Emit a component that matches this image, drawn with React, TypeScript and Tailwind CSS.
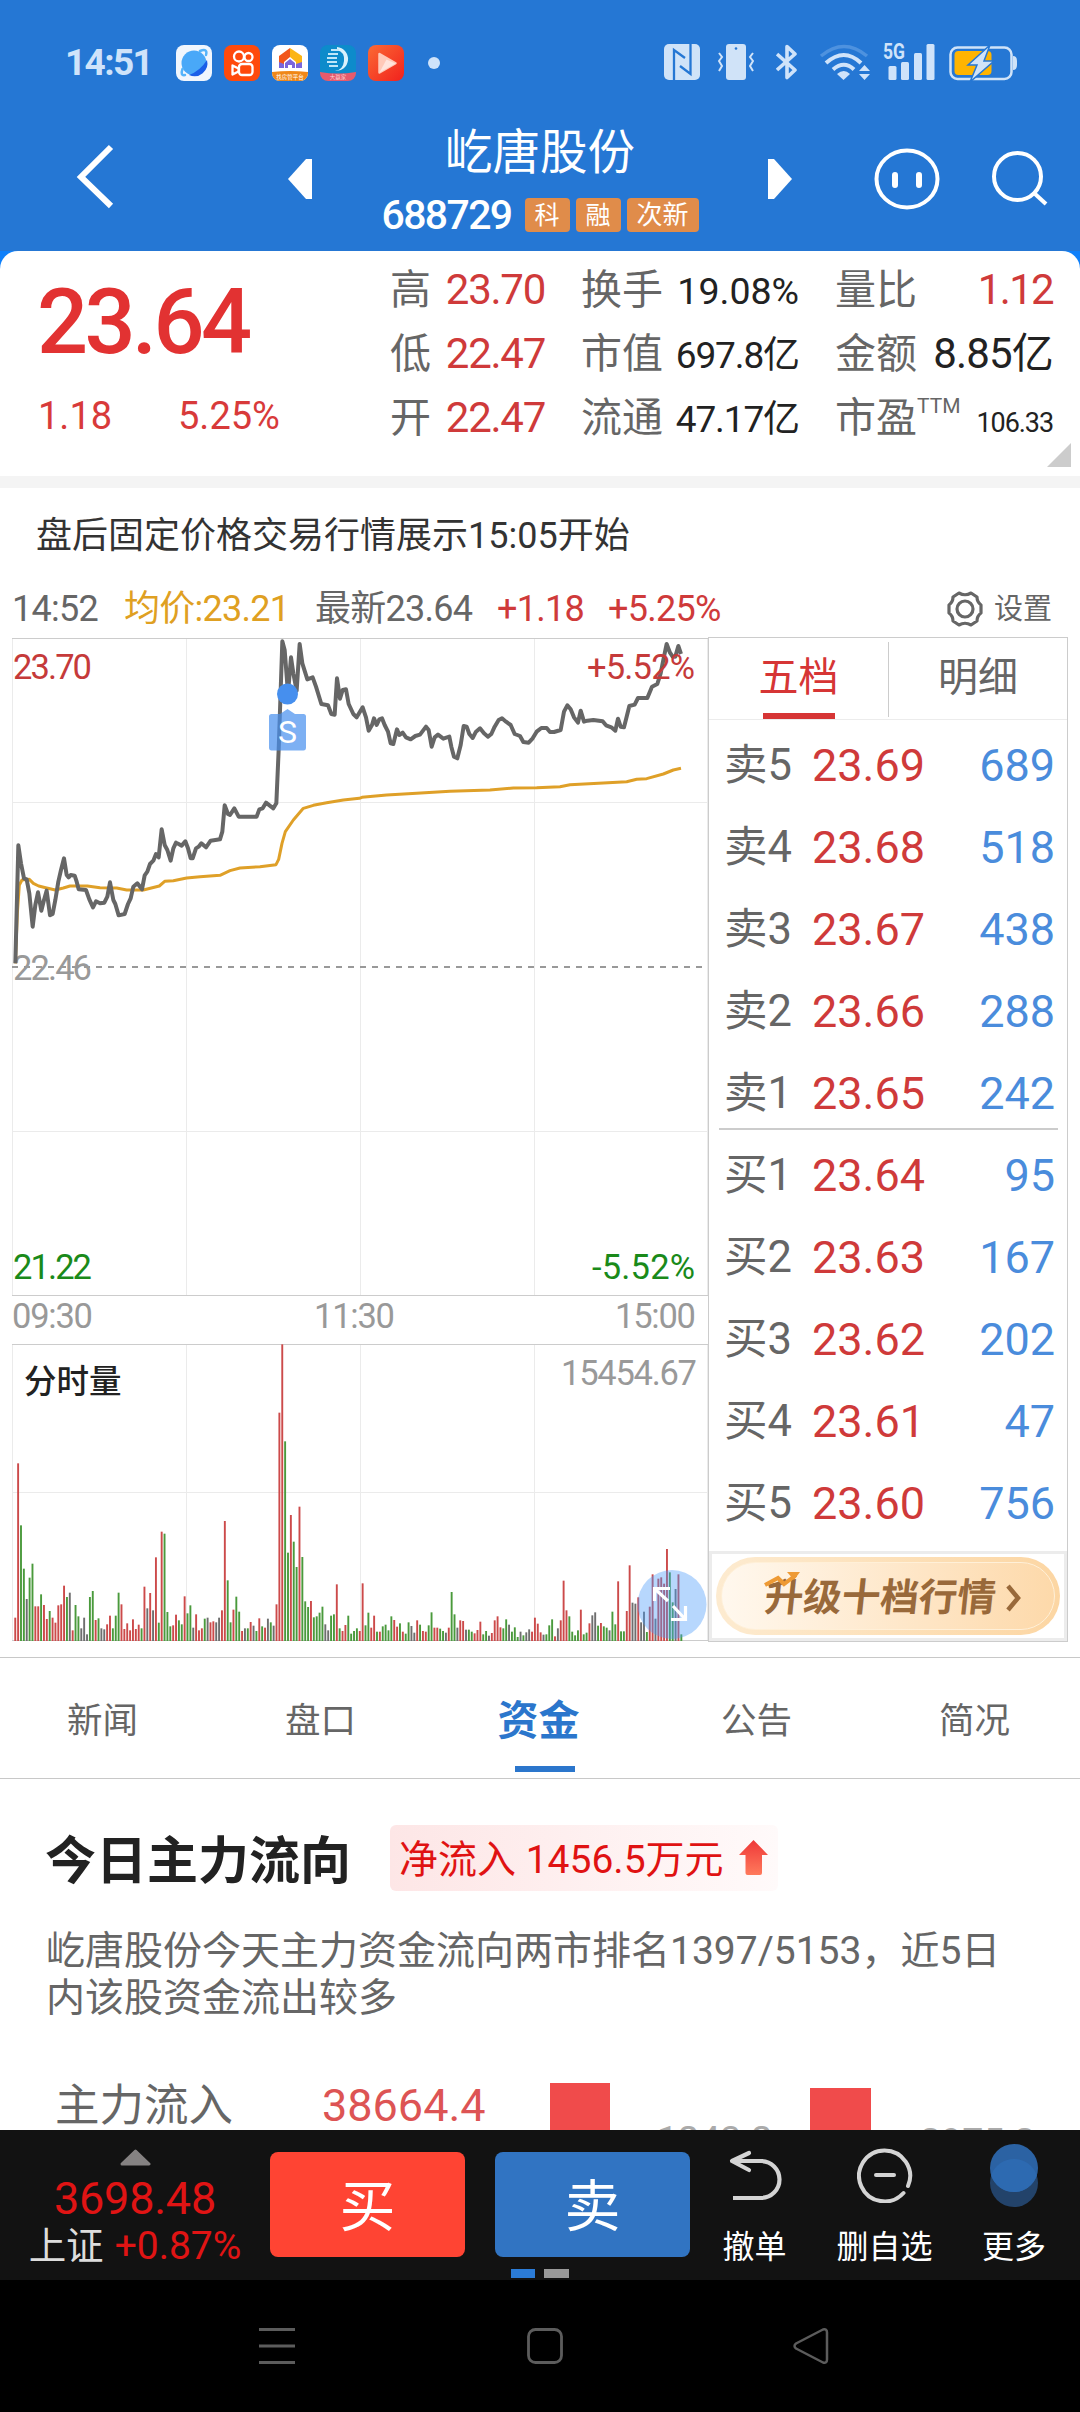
import React from 'react';

interface BookRow {
  label: string;
  price: string;
  amount: string;
}

const SELLS: BookRow[] = [
  { label: '卖5', price: '23.69', amount: '689' },
  { label: '卖4', price: '23.68', amount: '518' },
  { label: '卖3', price: '23.67', amount: '438' },
  { label: '卖2', price: '23.66', amount: '288' },
  { label: '卖1', price: '23.65', amount: '242' },
];

const BUYS: BookRow[] = [
  { label: '买1', price: '23.64', amount: '95' },
  { label: '买2', price: '23.63', amount: '167' },
  { label: '买3', price: '23.62', amount: '202' },
  { label: '买4', price: '23.61', amount: '47' },
  { label: '买5', price: '23.60', amount: '756' },
];

const TABS = ['新闻', '盘口', '资金', '公告', '简况'];

// Both lines use a 3x coordinate space
const PRICE_LINE =
  '46,1000 55,646 63,700 72,745 80,748 88,790 98,890 106,825 114,787 124,842 132,810 140,782 150,856 158,852 166,810 175,755 183,720 192,685 200,735 206,742 212,735 224,737 230,755 236,778 258,780 268,808 279,832 288,814 300,820 313,818 322,800 330,757 340,810 346,822 356,856 374,852 384,822 392,805 400,770 412,760 426,778 434,736 442,725 450,702 460,692 468,672 476,682 485,598 494,645 502,660 512,692 520,655 528,638 536,642 545,647 556,634 564,655 572,685 578,685 588,655 596,650 604,640 618,652 632,632 660,628 667,605 674,526 684,552 690,555 703,535 716,560 770,560 778,538 788,535 798,518 820,535 829,520 836,360 847,34 854,60 864,190 873,82 880,130 890,182 899,42 907,100 922,148 938,142 948,170 964,222 984,226 994,252 1004,254 1011,145 1020,206 1028,180 1038,178 1046,222 1060,252 1070,262 1088,232 1098,262 1106,302 1116,285 1122,265 1130,285 1138,268 1146,265 1154,285 1164,305 1172,340 1180,342 1191,298 1198,315 1208,308 1218,322 1232,328 1246,318 1260,314 1278,290 1286,300 1295,350 1304,322 1314,314 1330,326 1348,320 1354,350 1362,380 1372,385 1382,345 1391,288 1400,290 1408,312 1418,324 1428,305 1440,295 1452,310 1464,320 1474,312 1484,290 1496,270 1506,265 1518,275 1532,285 1544,312 1560,318 1570,336 1586,338 1598,325 1610,305 1624,294 1640,294 1650,306 1662,306 1682,300 1692,245 1702,226 1712,238 1722,262 1734,278 1742,242 1752,275 1762,272 1780,270 1808,274 1818,286 1834,292 1846,302 1854,266 1862,290 1872,292 1880,260 1888,228 1904,224 1914,204 1942,204 1956,170 1972,162 1982,130 1992,80 2000,42 2010,68 2018,80 2026,80 2035,48 2043,72';

const AVG_LINE =
  '46,1000 52,850 58,765 66,750 88,748 100,760 116,768 140,774 166,780 190,774 210,768 262,768 300,773 350,774 380,780 430,780 478,768 494,754 520,752 560,744 600,740 660,736 690,722 720,714 780,710 828,704 836,688 846,640 856,605 880,570 910,535 940,526 980,518 1030,510 1078,505 1086,502 1160,495 1250,490 1350,484 1470,480 1540,474 1610,473 1680,470 1710,464 1810,459 1880,455 1910,448 1940,446 1990,432 2020,420 2043,415';

// r = up, g = down, k = flat
const VOLUME =
  'r70 r533 g347 g217 k126 g190 g232 r104 r104 g140 r108 r66 g90 r70 r55 r107 r110 r166 g132 k145 r32 g108 g74 k38 k70 k20 g132 g150 r63 g68 k38 k35 r50 r76 g38 g76 g145 r110 r36 r53 r32 r65 r36 r49 g38 r163 k98 r144 k92 r251 g55 r328 g322 g87 g44 r47 r79 g62 g50 r134 g83 g107 k40 r80 r32 r38 g67 k70 r56 r59 k56 k70 r92 r360 g182 g56 r94 g133 g88 r30 k38 g38 r57 k46 g30 r68 g44 r40 k67 g56 k46 r110 r685 r890 g599 g265 r378 g298 g222 r403 g252 g119 g102 r120 g71 g74 g85 g103 k50 k32 g76 g80 r170 g38 r30 r48 g76 g22 g30 g38 r30 r173 g47 g85 r40 r76 g28 r28 g44 g49 g32 g74 r63 r43 g53 r28 g22 g56 k45 k25 r62 g49 r30 r28 g47 g86 r40 r40 g37 g30 k25 r40 g147 g80 k40 r62 r60 k34 g34 g28 r23 r33 r58 g20 g30 k16 r24 r62 r74 r41 g38 g65 k49 g28 g41 g12 k28 g17 k26 k35 r28 r70 r52 r26 k19 g20 g47 g65 r14 k38 r62 r181 r92 g74 g28 g17 g32 r94 g20 g25 r53 k77 k86 g46 r54 g44 g40 k32 g88 g50 r179 g29 g29 r90 r227 k115 k112 r131 k56 k88 g27 r103 r200 k67 r187 r191 r172 r276 g206 g116 k156 r200 g20'.split(' ');

const BAR_COLORS: Record<string, string> = { r: '#cc4a4a', g: '#4a9a3c', k: '#6e6e6e' };

function StatusBar() {
  return (
    <div className="flex h-[105px] shrink-0 items-start pt-[44px] pl-[65px] text-[#cfe3fa]">
      <span className="w-[111px] text-[37px] leading-[38px] font-bold tracking-[-0.045em]">14:51</span>
      <div className="flex gap-3">
        <svg className="mt-px h-9 w-9" viewBox="0 0 36 36">
          <rect width="36" height="36" rx="8" fill="#f1f6fd" />
          <circle cx="18" cy="18" r="12.500" fill="#49a8f8" />
          <path d="M31 15a13 13 0 0 1-18 15Q24 26 31 15z" fill="#1b5fe8" />
          <path d="M6.500 24Q4 31 9 30M24 6Q32 3 30 10" fill="none" stroke="#55b4fb" strokeWidth="2.500" strokeLinecap="round" />
        </svg>
        <svg className="mt-px h-9 w-9" viewBox="0 0 36 36" fill="none" stroke="#fff" strokeWidth="2.300">
          <rect width="36" height="36" rx="8" fill="#ff4a0c" stroke="none" />
          <circle cx="15" cy="11.500" r="5" />
          <circle cx="24.500" cy="12" r="4" />
          <rect x="15" y="19" width="13.500" height="11" rx="3" />
          <path d="M8.500 20.500l6 3v3l-6 3z" strokeLinejoin="round" />
        </svg>
        <svg className="mt-px h-9 w-9 overflow-visible" viewBox="0 0 36 36">
          <defs>
            <clipPath id="house-clip"><rect width="36" height="36" rx="8" /></clipPath>
          </defs>
          <g clipPath="url(#house-clip)">
            <rect width="36" height="36" fill="#fff" />
            <path d="M18 3L7 11v12h5v-6l6-5z" fill="#f2571b" />
            <path d="M18 3l12 8v12h-6v-6l-6-5z" fill="#fcb514" />
            <path d="M7 17l5 2v4H7zM24 19l6-2v6h-6z" fill="#7a66dc" />
            <path d="M13 23v-5l5-4 5 4v5h-3v-3h-4v3z" fill="#7a66dc" />
            <path d="M0 27q18-2 36 0v9H0z" fill="#ef8718" />
          </g>
          <text x="18" y="33.500" fontSize="5.500" fill="#fff" textAnchor="middle">找房管平台</text>
        </svg>
        <svg className="mt-px h-9 w-9 overflow-visible" viewBox="0 0 36 36">
          <defs>
            <clipPath id="bank-clip"><rect width="36" height="36" rx="8" /></clipPath>
          </defs>
          <g clipPath="url(#bank-clip)">
            <rect width="36" height="36" fill="#0d8bcb" />
            <path d="M17 2a12 12 0 1 1-2 24q8-1 9-10t-7-11z" fill="#d9f1fc" />
            <path d="M11 5h8M8 9h10M7 13h10M7 17h10M9 21h9" stroke="#bfe6f8" strokeWidth="2" />
            <path d="M0 27q18 3 36 0v9H0z" fill="#e75a6c" />
          </g>
          <text x="18" y="34" fontSize="5.500" fill="#fcd3d3" textAnchor="middle">大赢家</text>
        </svg>
        <svg className="mt-px h-9 w-9" viewBox="0 0 36 36">
          <defs>
            <linearGradient id="play-bg" x1="0" y1="0" x2="1" y2="1">
              <stop offset="0" stopColor="#fb6a34" />
              <stop offset="1" stopColor="#f1211d" />
            </linearGradient>
          </defs>
          <rect width="36" height="36" rx="8" fill="url(#play-bg)" />
          <path d="M11.500 9v18.500l16-9.250z" fill="#ffc9b8" stroke="#ffc9b8" strokeWidth="2.500" strokeLinejoin="round" />
          <path d="M11.500 27.500l7-13 9 4z" fill="#ffe4dc" />
        </svg>
      </div>
      <span className="mt-[13px] ml-[24px] h-3 w-3 rounded-full bg-[#cfe3fa]" />

      <svg className="ml-[224px] h-9 w-9" viewBox="0 0 36 36">
        <rect width="36" height="36" rx="5" fill="#d0e3f8" />
        <path d="M10 36V6l11 8M26.500 0v30L16 22" fill="none" stroke="#2577d4" strokeWidth="2.300" />
      </svg>
      <svg className="ml-[18px] h-9 w-9" viewBox="0 0 36 36">
        <rect x="8" width="20" height="36" rx="3" fill="#d0e3f8" />
        <circle cx="18" cy="4.500" r="1.300" fill="#2577d4" />
        <path d="M1 9l3 4-3 4 3 5-3 5M35 9l-3 4 3 4-3 5 3 5" fill="none" stroke="#d0e3f8" strokeWidth="2" />
      </svg>
      <svg className="ml-[22px] h-9 w-[22px]" viewBox="0 0 22 36" fill="none" stroke="currentColor" strokeWidth="3.600">
        <path d="M1 10l18 16-8 7.500v-31l8 7.500L1 26" strokeLinejoin="round" />
      </svg>
      <svg className="ml-[21px] h-[37px] w-[52px]" viewBox="0 0 52 37" fill="none" stroke="currentColor" strokeWidth="4">
        <path d="M2 12Q25-7 48 12" stroke="#4e92df" strokeWidth="3.500" />
        <path d="M7 19Q25 3 42 19M14 25.500Q25 16 35 25.500" />
        <path d="M18 30q7-6 13 0l-6.500 6z" fill="currentColor" stroke="none" />
        <path d="M40 27l5.500-6 5.500 6zM40 30l5.500 6 5.500-6z" fill="currentColor" stroke="none" />
      </svg>
      <svg className="ml-[12px] h-9 w-[54px] overflow-visible" viewBox="0 0 54 36" fill="currentColor">
        <text x="0" y="15" fontSize="22" fontWeight="700" textLength="22" lengthAdjust="spacingAndGlyphs">5G</text>
        <rect x="5.500" y="22" width="8" height="14" rx="1.500" />
        <rect x="18" y="18" width="8" height="18" rx="1.500" />
        <rect x="31" y="9" width="8" height="27" rx="1.500" />
        <rect x="43.500" y="0" width="8" height="36" rx="1.500" />
      </svg>
      <svg className="ml-[12px] h-[38px] w-[68px]" viewBox="0 0 68 38">
        <rect x="1.500" y="3.500" width="61" height="31.500" rx="7" fill="none" stroke="#d0e3f8" strokeWidth="2.500" />
        <path d="M64 12q4 0 4 5v4q0 5-4 5z" fill="#d0e3f8" />
        <rect x="5.500" y="7" width="37" height="24" rx="4" fill="#ffb400" />
        <path d="M41 1L19 21h9l-7 17 24-21H35z" fill="#d0e3f8" stroke="#2577d4" strokeWidth="1.500" />
      </svg>
    </div>
  );
}

function Header() {
  return (
    <div className="flex h-[146px] shrink-0 items-start text-white">
      <svg className="mt-[38px] ml-[74px] h-[66px] w-[40px]" viewBox="0 0 40 66" fill="none" stroke="currentColor" strokeWidth="6">
        <path d="M37 4L7 34l30 29" />
      </svg>
      <svg className="mt-[54px] ml-[174px] h-10 w-6" viewBox="0 0 24 40" fill="currentColor">
        <path d="M0 20L18 0h6v40h-6z" />
      </svg>
      <div className="ml-[28px] flex w-[400px] flex-col items-center pt-[22px]">
        <h1 className="text-[47.5px] leading-[52px]">屹唐股份</h1>
        <div className="mt-[17px] flex items-center gap-[6px]">
          <span className="w-[135px] text-[41px] leading-[38px] font-medium tracking-[-0.04em]">688729</span>
          <span className="ml-[2px] flex h-[34px] w-[45px] items-center justify-center rounded-sm bg-[#e08c4a] text-[25px] leading-none">科</span>
          <span className="flex h-[34px] w-[45px] items-center justify-center rounded-sm bg-[#e08c4a] text-[25px] leading-none">融</span>
          <span className="flex h-[34px] w-[72px] items-center justify-center rounded-sm bg-[#e08c4a] text-[26px] leading-none">次新</span>
        </div>
      </div>
      <svg className="mt-[54px] ml-[28px] h-10 w-6" viewBox="0 0 24 40" fill="currentColor">
        <path d="M24 20L6 0H0v40h6z" />
      </svg>
      <svg className="mt-[42px] ml-[82px] h-16 w-[66px]" viewBox="0 0 66 64" fill="none" stroke="currentColor" strokeWidth="4">
        <ellipse cx="33" cy="32" rx="30.500" ry="28.500" />
        <path d="M21 28v10M45 28v10" strokeWidth="6" strokeLinecap="round" />
      </svg>
      <svg className="mt-[44px] ml-[50px] h-16 w-[60px]" viewBox="0 0 60 64" fill="none" stroke="currentColor" strokeWidth="4">
        <circle cx="27.500" cy="27.500" r="23.500" />
        <path d="M44 44l12 11" />
      </svg>
    </div>
  );
}

function Stat({ label, value, className }: { label: React.ReactNode; value: string; className: string }) {
  return (
    <div className="flex h-16 items-baseline justify-between">
      <span className="text-[41px] leading-[64px] text-[#666]">{label}</span>
      <span className={className}>{value}</span>
    </div>
  );
}

function Summary() {
  return (
    <div className="relative flex h-[225px] shrink-0 rounded-t-[18px] bg-white">
      <div className="w-[390px] pl-[37px] text-[#d83a3a]">
        <div className="pt-[27px] text-[90px] leading-[90px] font-medium tracking-[-0.04em] text-[#e23232]">23.64</div>
        <div className="mt-[25px] flex text-[38px] leading-[46px]">
          <span className="w-[141px] pl-px">1.18</span>
          <span>5.25%</span>
        </div>
      </div>
      <div className="w-[155px] pt-[7px]">
        <Stat label="高" value="23.70" className="text-[42px] tracking-[-0.03em] text-[#cf3a3a]" />
        <Stat label="低" value="22.47" className="text-[42px] tracking-[-0.03em] text-[#cf3a3a]" />
        <Stat label="开" value="22.47" className="text-[42px] tracking-[-0.03em] text-[#cf3a3a]" />
      </div>
      <div className="ml-[36px] w-[218px] pt-[7px]">
        <Stat label="换手" value="19.08%" className="text-[37.5px] text-[#222]" />
        <Stat label="市值" value="697.8亿" className="text-[37px] tracking-[-0.03em] text-[#222]" />
        <Stat label="流通" value="47.17亿" className="text-[37px] tracking-[-0.03em] text-[#222]" />
      </div>
      <div className="ml-[36px] w-[218px] pt-[7px]">
        <Stat label="量比" value="1.12" className="text-[42px] tracking-[-0.04em] text-[#cf3a3a]" />
        <Stat label="金额" value="8.85亿" className="text-[42px] tracking-[-0.02em] text-[#222]" />
        <Stat
          label={<>市盈<span className="relative -top-[19px] text-[21px] leading-none">TTM</span></>}
          value="106.33"
          className="text-[27px] tracking-[-0.04em] text-[#222]"
        />
      </div>
      <svg className="absolute right-[9px] bottom-[9px] h-6 w-6" viewBox="0 0 24 24">
        <path d="M24 0v24H0z" fill="#ccc" />
      </svg>
    </div>
  );
}

function QuoteLine() {
  return (
    <div className="flex h-[58px] items-center text-[36px] leading-[44px] tracking-[-0.02em] whitespace-nowrap">
      <span className="w-[111px] pl-[12px] text-[#666]">14:52</span>
      <span className="w-[192px] pl-[13px] text-[#dfa022]">均价:23.21</span>
      <span className="w-[182px] pl-[12px] text-[#666]">最新23.64</span>
      <span className="w-[111px] pl-[12px] text-[#cf3a3a]">+1.18</span>
      <span className="w-[350px] pl-[12px] text-[#cf3a3a]">+5.25%</span>
      <svg className="h-[38px] w-[38px]" viewBox="0 0 38 38" fill="none" stroke="#666" strokeWidth="3.200" strokeLinejoin="round">
        <path d="M13 3q6 3.500 12 0l6 4q0 5 4 8v8q-4 3-4 8l-6 4q-6-3.500-12 0l-6-4q0-5-4-8v-8q4-3 4-8z" />
        <circle cx="19" cy="19" r="8" />
      </svg>
      <span className="ml-[10px] text-[29px] tracking-normal text-[#666]">设置</span>
    </div>
  );
}

function PriceChart() {
  return (
    <svg className="block h-[706px] w-[708px]" viewBox="0 0 708 706">
      <path d="M12.500 0V657M186.500 0V657M360.500 0V657M534.500 0V657M707.500 0V657M12 164.500H708M12 493.500H708" stroke="#ebebeb" strokeWidth="1" />
      <path d="M12 .5H708M12 657.500H708" stroke="#ccc" strokeWidth="1.200" />
      <path d="M12 329H706" stroke="#999" strokeWidth="2" strokeDasharray="6 6" />
      <text x="13" y="342" fontSize="34.500" fill="#999" textLength="79">22.46</text>
      <g transform="translate(0 -8) scale(.33333)" fill="none" strokeLinejoin="round">
        <polyline points={AVG_LINE} stroke="#dfa028" strokeWidth="9" />
        <polyline points={PRICE_LINE} stroke="#666" strokeWidth="12" />
      </g>
      <circle cx="287.500" cy="56" r="10.500" fill="#468fee" />
      <path d="M280 76l7.500-5 7.500 5h8.500q2.500 0 2.500 2.500v31q0 3-2.500 3h-32q-2.500 0-2.500-3v-31q0-2.500 2.500-2.500z" fill="#468fee" opacity=".7" />
      <text x="287.500" y="105" fontSize="32" fill="#fff" textAnchor="middle">S</text>
      <g fontSize="34.500" fill="#999">
        <text x="13" y="41" fill="#c53a3a" textLength="79">23.70</text>
        <text x="587" y="41" fill="#c53a3a" textLength="108">+5.52%</text>
        <text x="13" y="641" fill="#1a8a1a" textLength="79">21.22</text>
        <text x="592" y="641" fill="#1a8a1a" textLength="103">-5.52%</text>
        <text x="12" y="690" textLength="81">09:30</text>
        <text x="314" y="690" textLength="81">11:30</text>
        <text x="615" y="690" textLength="81">15:00</text>
      </g>
    </svg>
  );
}

function VolumeChart() {
  return (
    <svg className="block h-[298px] w-[708px]" viewBox="0 0 708 298">
      <path d="M12.500 0V297M186.500 0V297M360.500 0V297M534.500 0V297M707.500 0V297M12 148.500H708" stroke="#ebebeb" strokeWidth="1" />
      <path d="M12 .5H708M12 296.500H708" stroke="#ccc" strokeWidth="1.200" />
      {VOLUME.map((bar, i) => {
        const h = Number(bar.slice(1)) / 3;
        return <rect key={i} x={14.3 + i * 2.871} y={297 - h} width="1.900" height={h} fill={BAR_COLORS[bar[0]]} />;
      })}
      <text x="24" y="49" fontSize="32.500" fontWeight="500" fill="#222">分时量</text>
      <text x="561" y="41" fontSize="34.500" fill="#999" textLength="136">15454.67</text>
      <circle cx="672" cy="260.500" r="34.500" fill="#4a9cfb" opacity=".4" />
      <path d="M668 257l-13-12M670 244.500h-15.500V257M673 262l12 13M685.500 262v13.500H671" fill="none" stroke="#fff" strokeWidth="3.200" />
    </svg>
  );
}

function BookLine({ row }: { row: BookRow }) {
  return (
    <div className="flex h-[82px] items-center text-[45px] leading-[54px]">
      <span className="w-[88px] text-[43.5px] text-[#666]">{row.label}</span>
      <span className="text-[#cf3a3a]">{row.price}</span>
      <span className="ml-auto text-[#4a8cdc]">{row.amount}</span>
    </div>
  );
}

function OrderBook() {
  return (
    <div className="-mt-px flex h-[1005px] w-[360px] flex-col border border-[#ccc]">
      <div className="flex h-[82px] shrink-0 border-b border-[#ececec] pt-[4px] text-[40px] leading-[72px]">
        <div className="flex h-[75px] w-[180px] flex-col items-center border-r border-[#ccc] text-[#d63535]">
          <span className="h-[71px] shrink-0">五档</span>
          <span className="h-[6px] w-[72px] shrink-0 bg-[#d63535]" />
        </div>
        <div className="flex-1 text-center text-[#666]">明细</div>
      </div>
      <div className="pt-[5px] pr-[12px] pl-[15px]">
        {SELLS.map((row) => <BookLine key={row.label} row={row} />)}
      </div>
      <div className="mx-auto -mt-[7px] h-[2px] w-[339px] shrink-0 bg-[#ccc]" />
      <div className="pt-[5px] pr-[12px] pl-[15px]">
        {BUYS.map((row) => <BookLine key={row.label} row={row} />)}
      </div>
      <div className="mt-auto flex h-[90px] shrink-0 items-center border-[3px] border-[#ececec] px-[4px]">
        <div className="h-[78px] w-full rounded-full bg-gradient-to-r from-[#fdebd0] to-[#fcd6a3] p-[5px]">
          <div className="relative flex h-full w-full items-center rounded-full border border-[#fff0d8] bg-gradient-to-r from-[#fff8ee] to-[#fdd9aa] pl-[43px] text-[38.5px] leading-none font-bold text-[#99693a]">
            <span className="-skew-x-6 pt-[5px]">升级十档行情</span>
            <svg className="mt-1 ml-[9px] h-7 w-5" viewBox="0 0 20 28" fill="none" stroke="currentColor" strokeWidth="4.500">
              <path d="M3 2l10 12L3 26" />
            </svg>
            <svg className="absolute top-[7px] left-[41px] h-[18px] w-[38px]" viewBox="0 0 38 18" fill="none" stroke="#ee9a34" strokeWidth="4">
              <path d="M2 15l13-7 6 6L33 5" />
              <path d="M24 2h13l-6 8z" fill="#ee9a34" stroke="none" />
            </svg>
          </div>
        </div>
      </div>
    </div>
  );
}

function DetailTabs() {
  return (
    <div className="mt-[15px] flex h-[122px] shrink-0 justify-center border-y border-[#c8c8c8] pr-[3px]">
      {TABS.map((tab) => (
        <div key={tab} className="flex w-[218px] shrink-0 flex-col items-center">
          {tab === '资金' ? (
            <>
              <span className="h-[108px] text-[41px] leading-[126px] font-bold text-[#2b76cc]">{tab}</span>
              <span className="ml-[12px] h-[6px] w-[60px] bg-[#2b76cc]" />
            </>
          ) : (
            <span className="text-[35.5px] leading-[126px] text-[#666]">{tab}</span>
          )}
        </div>
      ))}
    </div>
  );
}

function MoneyFlow() {
  return (
    <div className="flex min-h-0 flex-1 flex-col overflow-hidden text-[#666]">
      <div className="flex shrink-0 items-center pt-[46px] pl-[45px]">
        <h2 className="w-[345px] pt-[7px] text-[51px] leading-[59px] font-bold text-[#222]">今日主力流向</h2>
        <div className="flex h-[66px] w-[388px] items-center rounded-md bg-gradient-to-r from-[#fde6e6] to-[#fffafa] pl-[9px] text-[39px] leading-none whitespace-nowrap text-[#e01212]">
          <span className="pt-[4px]">净流入 1456.5万元</span>
          <svg className="ml-[15px] h-9 w-[29px]" viewBox="0 0 29 36">
            <defs>
              <linearGradient id="up-arrow" x1="0" y1="0" x2="0" y2="1">
                <stop offset="0" stopColor="#ee3838" />
                <stop offset="1" stopColor="#ff7a5c" />
              </linearGradient>
            </defs>
            <path d="M14.500 0L29 15h-6v18q0 2-2 2H8.500q-2 0-2-2V15H0z" fill="url(#up-arrow)" />
          </svg>
        </div>
      </div>
      <p className="mt-[37px] shrink-0 pl-[46px] text-[39px] leading-[47px] whitespace-nowrap">
        屹唐股份今天主力资金流向两市排名1397/5153，近5日<br />内该股资金流出较多
      </p>
      <div className="mt-[61px] flex shrink-0 items-start">
        <span className="w-[322px] pl-[55px] text-[44.5px] leading-[46px]">主力流入</span>
        <span className="w-[228px] text-[45px] leading-[46px] text-[#dd5454]">38664.4</span>
        <span className="h-[80px] w-[60px] bg-[#f04b4b]" />
        <span className="mt-[32px] w-[200px] pl-[47px] text-[37.5px] leading-[48px] text-[#aaa]">1243.2</span>
        <span className="mt-[5px] h-[80px] w-[61px] bg-[#f04b4b]" />
        <span className="mt-[34px] pl-[49px] text-[37.5px] leading-[48px] text-[#aaa]">2975.2</span>
      </div>
    </div>
  );
}

function BottomBar() {
  return (
    <div className="flex h-[150px] shrink-0 bg-[#121212] text-white">
      <div className="flex w-[270px] flex-col items-center pt-[19px]">
        <svg className="h-[17px] w-[31px]" viewBox="0 0 31 17">
          <path d="M15.500 2L29 15H2z" fill="#858282" stroke="#858282" strokeWidth="3" strokeLinejoin="round" />
        </svg>
        <span className="mt-[6px] text-[45px] leading-[54px] tracking-[-0.005em] text-[#e01414]">3698.48</span>
        <div className="flex gap-[11px] text-[39px] leading-[40px]">
          <span className="text-[37.5px] text-[#ddd]">上证</span>
          <span className="text-[#e01414]">+0.87%</span>
        </div>
      </div>
      <div className="pt-[22px]">
        <div className="flex gap-[30px] text-[56px] leading-[110px]">
          <button className="h-[105px] w-[195px] rounded-lg bg-[#ff4433]">买</button>
          <button className="h-[105px] w-[195px] rounded-lg bg-[#3174c2]">卖</button>
        </div>
        <div className="mt-[12px] flex gap-[9px] pl-[241px]">
          <span className="h-[9px] w-[24px] bg-[#2b7bd6]" />
          <span className="h-[9px] w-[25px] bg-[#999]" />
        </div>
      </div>
      <div className="flex pt-[17px] text-[32px] leading-[40px]">
        <div className="flex w-[129px] flex-col items-center">
          <svg className="h-[56px] w-[56px]" viewBox="0 0 56 56" fill="none" stroke="#d4d4d4" strokeWidth="4.200">
            <path d="M22 6L5 14l17 9" strokeLinecap="round" strokeLinejoin="round" />
            <path d="M5 14h29a18 18 0 0 1 0 37H6" />
          </svg>
          <span className="mt-[24px]">撤单</span>
        </div>
        <div className="flex w-[131px] flex-col items-center">
          <svg className="h-[56px] w-[56px]" viewBox="0 0 56 56" fill="none" stroke="#d4d4d4" strokeWidth="4" strokeLinecap="round">
            <path d="M51 39A25.500 25.500 0 1 0 46.500 46" />
            <path d="M19 28h18" />
          </svg>
          <span className="mt-[24px]">删自选</span>
        </div>
        <div className="flex w-[128px] flex-col items-center">
          <svg className="-mt-[5px] h-[66px] w-[50px]" viewBox="0 0 50 66">
            <circle cx="25" cy="41" r="24" fill="#23436a" />
            <circle cx="25" cy="26" r="24" fill="#2b62a3" />
            <path d="M2.200 33.500a24 24 0 0 1 45.600 0a24 24 0 0 1-45.600 0z" fill="#2d6ab1" />
          </svg>
          <span className="mt-[19px]">更多</span>
        </div>
      </div>
    </div>
  );
}

function SystemNav() {
  return (
    <div className="flex h-[132px] shrink-0 items-start bg-black pt-[46px] pl-[258px]">
      <svg className="h-[40px] w-[38px]" viewBox="0 0 38 40" stroke="#5c5c5c" strokeWidth="3">
        <path d="M1 3.500h36M1 20h36M1 36.500h36" />
      </svg>
      <svg className="ml-[230px] h-[40px] w-[38px]" viewBox="0 0 38 40" fill="none" stroke="#5c5c5c" strokeWidth="2.800">
        <rect x="2.500" y="3.500" width="33" height="33" rx="7" />
      </svg>
      <svg className="ml-[229px] h-[40px] w-[38px]" viewBox="0 0 38 40" fill="none" stroke="#5c5c5c" strokeWidth="2.500" strokeLinejoin="round">
        <path d="M3 17.500L30 3.500q4-1 4 3v27q0 4-4 3L3 22.500q-3-2.500 0-5z" />
      </svg>
    </div>
  );
}

export default function App() {
  return (
    <div className="flex h-[2412px] w-[1080px] flex-col overflow-hidden bg-white font-[Roboto,'Noto_Sans_CJK_SC',sans-serif]">
      <div className="flex shrink-0 flex-col bg-[#2577d4]">
        <StatusBar />
        <Header />
      </div>
      <div className="shrink-0 bg-[#0f80fa]">
        <Summary />
      </div>
      <div className="h-3 shrink-0 bg-[#f4f4f4]" />
      <div className="h-[92px] shrink-0 pl-[36px] text-[36px] leading-[96px] text-[#333]">盘后固定价格交易行情展示15:05开始</div>
      <div className="shrink-0">
        <QuoteLine />
      </div>
      <div className="flex h-[1004px] shrink-0">
        <div className="flex w-[708px] flex-col">
          <PriceChart />
          <VolumeChart />
        </div>
        <OrderBook />
      </div>
      <DetailTabs />
      <MoneyFlow />
      <BottomBar />
      <SystemNav />
    </div>
  );
}
